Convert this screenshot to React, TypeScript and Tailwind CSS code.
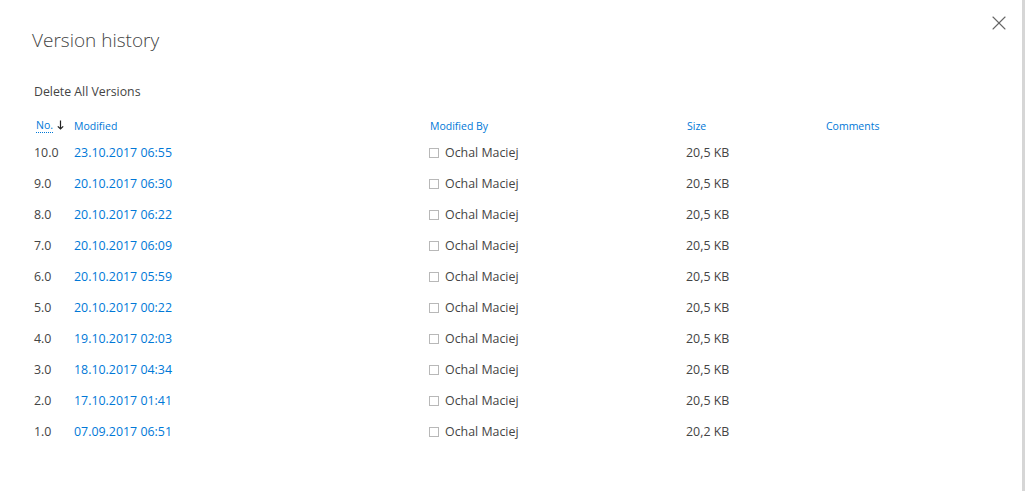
import { X } from "lucide-react";

type Version = { no: string; modified: string; by: string; size: string };

const versions: Version[] = [
  { no: "10.0", modified: "23.10.2017 06:55", by: "Ochal Maciej", size: "20,5 KB" },
  { no: "9.0", modified: "20.10.2017 06:30", by: "Ochal Maciej", size: "20,5 KB" },
  { no: "8.0", modified: "20.10.2017 06:22", by: "Ochal Maciej", size: "20,5 KB" },
  { no: "7.0", modified: "20.10.2017 06:09", by: "Ochal Maciej", size: "20,5 KB" },
  { no: "6.0", modified: "20.10.2017 05:59", by: "Ochal Maciej", size: "20,5 KB" },
  { no: "5.0", modified: "20.10.2017 00:22", by: "Ochal Maciej", size: "20,5 KB" },
  { no: "4.0", modified: "19.10.2017 02:03", by: "Ochal Maciej", size: "20,5 KB" },
  { no: "3.0", modified: "18.10.2017 04:34", by: "Ochal Maciej", size: "20,5 KB" },
  { no: "2.0", modified: "17.10.2017 01:41", by: "Ochal Maciej", size: "20,5 KB" },
  { no: "1.0", modified: "07.09.2017 06:51", by: "Ochal Maciej", size: "20,2 KB" },
];

const cols = "grid grid-cols-[40px_356px_256px_140px_1fr]";

export default function App() {
  return (
    <div
      className="relative w-[1025px] h-[491px] bg-white border-r-[3px] border-[#d6d6d6] overflow-hidden"
      style={{ fontFamily: '"Segoe UI", "Open Sans", sans-serif' }}
    >
      <button className="absolute top-[11px] right-[11px] text-[#666]">
        <X size={24} strokeWidth={1.1} />
      </button>

      <div className="pl-[34px] pt-[27px]">
        <h1 className="-ml-[2px] text-[19px] leading-[26px] font-light text-[#444]">Version history</h1>

        <div className="mt-[29px] text-[12.3px] leading-[20px] text-[#444]">Delete All Versions</div>

        <div className={`${cols} mt-[14px] text-[10.5px] leading-[20px] text-[#0078d7]`}>
          <div className="flex items-center pl-[2px]">
            <span className="border-b border-dotted border-[#0078d7] leading-[13px]">No.</span>
            <svg className="ml-[4px] mt-[-2px]" width="7" height="10" viewBox="0 0 7 10" fill="none" stroke="#222" strokeWidth="1.2">
              <path d="M3.5 0.5V9M0.8 6.3L3.5 9L6.2 6.3" />
            </svg>
          </div>
          <div>Modified</div>
          <div>Modified By</div>
          <div className="pl-[1px]">Size</div>
          <div>Comments</div>
        </div>

        <div className="pt-[2px]">
          {versions.map((v) => (
            <div key={v.no} className={`${cols} h-[31px] items-center text-[12.4px] text-[#444]`}>
              <div>{v.no}</div>
              <div className="text-[#0078d7]">{v.modified}</div>
              <div className="flex items-center">
                <span className="-ml-[1px] w-[10px] h-[10px] border border-[#b8b8b8] mr-[6px]" />
                <span>{v.by}</span>
              </div>
              <div>{v.size}</div>
              <div />
            </div>
          ))}
        </div>
      </div>
    </div>
  );
}
